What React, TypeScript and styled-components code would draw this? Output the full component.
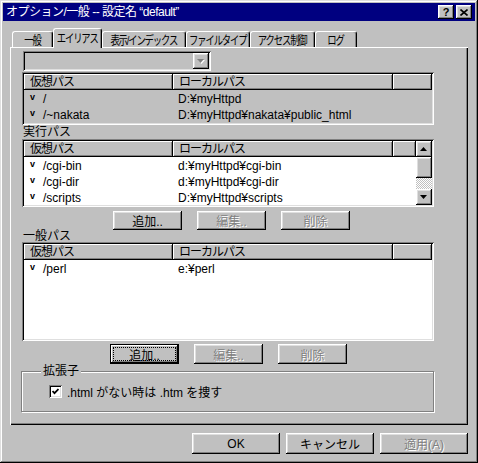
import React from 'react';
import styled, { createGlobalStyle } from 'styled-components';

const face = '#c0c0c0';
const shadow = '#808080';
const light = '#dfdfdf';

const raised = `
  box-shadow: inset -1px -1px #000, inset 1px 1px #fff, inset -2px -2px ${ shadow }, inset 2px 2px ${ light };
`;

const sunken = `
  box-shadow: inset 1px 1px ${ shadow }, inset -1px -1px #fff, inset 2px 2px #000, inset -2px -2px ${ light };
`;

const GlobalStyle = createGlobalStyle`
  body {
    margin: 0;
    background: ${ face };
    font-family: "Liberation Sans", "Noto Sans CJK JP", sans-serif;
    font-size: 12px;
    color: #000;
  }
`;

interface IRow {
  virtual: string;
  local: string;
}

const aliasRows: IRow[] = [
  { virtual: '/', local: 'D:¥myHttpd' },
  { virtual: '/~nakata', local: 'D:¥myHttpd¥nakata¥public_html' },
];

const execRows: IRow[] = [
  { virtual: '/cgi-bin', local: 'd:¥myHttpd¥cgi-bin' },
  { virtual: '/cgi-dir', local: 'd:¥myHttpd¥cgi-dir' },
  { virtual: '/scripts', local: 'D:¥myHttpd¥scripts' },
];

const generalRows: IRow[] = [
  { virtual: '/perl', local: 'e:¥perl' },
];

const tabs = [
  { label: '一般', width: 41 },
  { label: 'エイリアス', width: 49, active: true },
  { label: '表示/インデックス', width: 84 },
  { label: 'ファイルタイプ', width: 64 },
  { label: 'アクセス制御', width: 65 },
  { label: 'ログ', width: 42 },
];

function Arrow(props: { down?: boolean; disabled?: boolean }) {
  const fill = props.disabled ? shadow : '#000';
  const points = props.down ? '0,0 7,0 3.5,4' : '3.5,0 7,4 0,4';
  return (
    <svg width='8' height='5' viewBox='0 0 8 5'>
      { props.disabled && <polygon points={ points } fill='#fff' transform='translate(1,1)'/> }
      <polygon points={ points } fill={ fill }/>
    </svg>
  );
}

function ListView(props: { rows: IRow[]; height: number; disabled?: boolean; scroll?: boolean }) {
  return (
    <List $h={ props.height } $disabled={ props.disabled }>
      <ListMain>
        <HeaderRow>
          <HeaderCell $w={ 149 }>仮想パス</HeaderCell>
          <HeaderCell $w={ 220 }>ローカルパス</HeaderCell>
          <HeaderCell/>
        </HeaderRow>
        { props.rows.map((row) => (
          <Row key={ row.virtual }>
            <VirtualCell>
              <StateMark>v</StateMark>
              { row.virtual }
            </VirtualCell>
            <LocalCell>{ row.local }</LocalCell>
          </Row>
        )) }
      </ListMain>
      { props.scroll && (
        <ScrollBar>
          <ScrollButton><Arrow/></ScrollButton>
          <Thumb/>
          <Track/>
          <ScrollButton><Arrow down/></ScrollButton>
        </ScrollBar>
      ) }
    </List>
  );
}

function App() {
  return (
    <>
      <GlobalStyle/>
      <Window>
        <TitleBar>
          <TitleText>オプション/一般 -- 設定名 “default”</TitleText>
          <CaptionButton>?</CaptionButton>
          <CaptionButton>
            <svg width='8' height='7' viewBox='0 0 8 7'>
              <path d='M0.5 0.5 L7.5 6.5 M7.5 0.5 L0.5 6.5' stroke='#000' strokeWidth='1.6'/>
            </svg>
          </CaptionButton>
        </TitleBar>
        <Body>
          <TabStrip>
            { tabs.map((tab) => (
              <Tab key={ tab.label } $w={ tab.width } $active={ tab.active }>
                <TabLabel>{ tab.label }</TabLabel>
              </Tab>
            )) }
          </TabStrip>
          <Panel>
            <Combo>
              <ComboButton><Arrow down disabled/></ComboButton>
            </Combo>
            <ListView rows={ aliasRows } height={ 53 } disabled/>
            <SectionLabel>実行パス</SectionLabel>
            <ListView rows={ execRows } height={ 68 } scroll/>
            <ButtonRow $offset={ 91 } $top={ 4 }>
              <PushButton>追加..</PushButton>
              <PushButton disabled>編集..</PushButton>
              <PushButton disabled>削除</PushButton>
            </ButtonRow>
            <SectionLabel $h={ 12 }>一般パス</SectionLabel>
            <ListView rows={ generalRows } height={ 99 }/>
            <ButtonRow $offset={ 88 } $top={ 3 } $h={ 20 }>
              <PushButton className='focus'>追加..</PushButton>
              <PushButton disabled>編集..</PushButton>
              <PushButton disabled>削除</PushButton>
            </ButtonRow>
            <GroupBox>
              <GroupLabel>拡張子</GroupLabel>
              <CheckRow>
                <CheckBox>
                  <svg width='7' height='7' viewBox='0 0 7 7'>
                    <polyline points='0.5,3 2.5,5.2 6.5,1' fill='none' stroke='#000' strokeWidth='1.8'/>
                  </svg>
                </CheckBox>
                .html がない時は .htm を捜す
              </CheckRow>
            </GroupBox>
          </Panel>
          <Footer>
            <DialogButton>OK</DialogButton>
            <DialogButton>キャンセル</DialogButton>
            <DialogButton disabled>適用(A)</DialogButton>
          </Footer>
        </Body>
      </Window>
    </>
  );
}

const Window = styled.div`
  width: 478px;
  height: 463px;
  box-sizing: border-box;
  padding: 3px;
  background: ${ face };
  display: flex;
  flex-direction: column;
  box-shadow: inset -1px -1px #000, inset 1px 1px ${ light }, inset -2px -2px ${ shadow }, inset 2px 2px #fff;
`;

const TitleBar = styled.div`
  height: 18px;
  background: #000080;
  color: #fff;
  display: flex;
  align-items: center;
  padding: 0 3px 0 3px;
  gap: 2px;
`;

const TitleText = styled.div`
  flex: 1;
  font-size: 12px;
  letter-spacing: -0.5px;
  line-height: 18px;
  white-space: nowrap;
`;

const CaptionButton = styled.div`
  width: 16px;
  height: 14px;
  box-sizing: border-box;
  background: ${ face };
  color: #000;
  display: flex;
  align-items: center;
  justify-content: center;
  font-weight: bold;
  font-size: 11px;
  ${ raised }
`;

const Body = styled.div`
  display: flex;
  flex-direction: column;
  padding: 7px 7px 0 7px;
`;

const TabStrip = styled.div`
  height: 20px;
  display: flex;
  align-items: flex-end;
  padding-left: 2px;
  margin-bottom: -1px;
  position: relative;
  z-index: 1;
`;

const Tab = styled.div<{ $w: number; $active?: boolean }>`
  width: ${ (p) => p.$w }px;
  height: ${ (p) => p.$active ? 20 : 16 }px;
  margin-bottom: ${ (p) => p.$active ? 0 : 1 }px;
  box-sizing: border-box;
  background: ${ face };
  border-top: 1px solid #fff;
  border-left: 1px solid #fff;
  border-right: 1px solid #000;
  border-radius: 3px 3px 0 0;
  box-shadow: inset -1px 0 ${ shadow };
  display: flex;
  align-items: center;
  justify-content: center;
  padding-bottom: ${ (p) => p.$active ? 2 : 0 }px;
  white-space: nowrap;
  position: relative;
  z-index: ${ (p) => p.$active ? 1 : 0 };
`;

const TabLabel = styled.span`
  display: inline-block;
  font-size: 12px;
  letter-spacing: -1.5px;
  transform: scaleX(0.78);
  transform-origin: center;
`;

const Panel = styled.div`
  width: 458px;
  height: 378px;
  box-sizing: border-box;
  padding: 4px 0 0 12px;
  display: flex;
  flex-direction: column;
  box-shadow: inset 1px 1px #fff, inset -1px -1px #000, inset -2px -2px ${ shadow };
`;

const Combo = styled.div`
  width: 188px;
  height: 20px;
  margin-left: 1px;
  box-sizing: border-box;
  padding: 2px;
  display: flex;
  justify-content: flex-end;
  background: ${ face };
  ${ sunken }
`;

const ComboButton = styled.div`
  width: 16px;
  height: 16px;
  box-sizing: border-box;
  display: flex;
  align-items: center;
  justify-content: center;
  ${ raised }
`;

const List = styled.div<{ $h: number; $disabled?: boolean }>`
  width: 412px;
  height: ${ (p) => p.$h }px;
  margin-top: 1px;
  box-sizing: border-box;
  padding: 2px;
  display: flex;
  background: ${ (p) => p.$disabled ? face : '#fff' };
  ${ sunken }
`;

const ListMain = styled.div`
  flex: 1;
  display: flex;
  flex-direction: column;
  overflow: hidden;
`;

const HeaderRow = styled.div`
  height: 16px;
  display: flex;
  flex-shrink: 0;
  margin-bottom: 1px;
`;

const HeaderCell = styled.div<{ $w?: number }>`
  ${ (p) => p.$w ? `width: ${ p.$w }px;` : 'flex: 1;' }
  box-sizing: border-box;
  background: ${ face };
  padding-left: 6px;
  line-height: 16px;
  letter-spacing: -1px;
  white-space: nowrap;
  box-shadow: inset -1px -1px #000, inset 1px 1px #fff, inset -2px -2px ${ shadow };
`;

const Row = styled.div`
  height: 16px;
  line-height: 14px;
  display: flex;
  align-items: center;
  flex-shrink: 0;
  white-space: nowrap;
`;

const VirtualCell = styled.div`
  width: 149px;
  box-sizing: border-box;
  padding-left: 6px;
  display: flex;
  align-items: center;
`;

const StateMark = styled.span`
  width: 13px;
  font-size: 9px;
  font-weight: bold;
  position: relative;
  top: -2px;
`;

const LocalCell = styled.div`
  padding-left: 5px;
`;

const ScrollBar = styled.div`
  width: 16px;
  display: flex;
  flex-direction: column;
`;

const ScrollButton = styled.div`
  width: 16px;
  height: 16px;
  box-sizing: border-box;
  background: ${ face };
  display: flex;
  align-items: center;
  justify-content: center;
  ${ raised }
`;

const Thumb = styled.div`
  height: 21px;
  background: ${ face };
  ${ raised }
`;

const Track = styled.div`
  flex: 1;
  background: repeating-conic-gradient(#fff 0 25%, ${ face } 0 50%) 0 0 / 2px 2px;
`;

const SectionLabel = styled.div<{ $h?: number }>`
  height: ${ (p) => p.$h || 14 }px;
  line-height: ${ (p) => p.$h || 14 }px;
  padding-left: 1px;
  margin-top: -1px;
  position: relative;
  top: 1px;
`;

const ButtonRow = styled.div<{ $offset: number; $top: number; $h?: number }>`
  display: flex;
  gap: 15px;
  height: ${ (p) => p.$h || 19 }px;
  margin-top: ${ (p) => p.$top }px;
  padding-left: ${ (p) => p.$offset }px;
`;

const PushButton = styled.button`
  width: 69px;
  height: 100%;
  box-sizing: border-box;
  padding: 0;
  border: none;
  background: ${ face };
  font-family: inherit;
  font-size: 12px;
  color: #000;
  position: relative;
  ${ raised }
  &:disabled {
    color: ${ shadow };
    text-shadow: 1px 1px #fff;
  }
  &.focus {
    box-shadow: inset 0 0 0 1px #000, inset -2px -2px #000, inset 2px 2px #fff, inset -3px -3px ${ shadow };
  }
  &.focus::after {
    content: '';
    position: absolute;
    inset: 3px;
    border: 1px dotted #000;
  }
`;

const GroupBox = styled.div`
  width: 413px;
  height: 41px;
  margin: 7px 0 0 -1px;
  box-sizing: border-box;
  border: 1px solid ${ shadow };
  box-shadow: inset 1px 1px #fff, 1px 1px #fff;
  position: relative;
  padding: 13px 0 0 27px;
`;

const GroupLabel = styled.div`
  position: absolute;
  top: -8px;
  left: 19px;
  padding: 0 2px;
  background: ${ face };
  line-height: 14px;
`;

const CheckRow = styled.div`
  display: flex;
  align-items: center;
  gap: 5px;
  height: 13px;
  white-space: nowrap;
`;

const CheckBox = styled.div`
  width: 13px;
  height: 13px;
  box-sizing: border-box;
  background: #fff;
  display: flex;
  align-items: center;
  justify-content: center;
  ${ sunken }
`;

const Footer = styled.div`
  display: flex;
  justify-content: flex-end;
  gap: 6px;
  margin-top: 8px;
`;

const DialogButton = styled(PushButton)`
  width: 88px;
  height: 21px;
`;

export default App;
